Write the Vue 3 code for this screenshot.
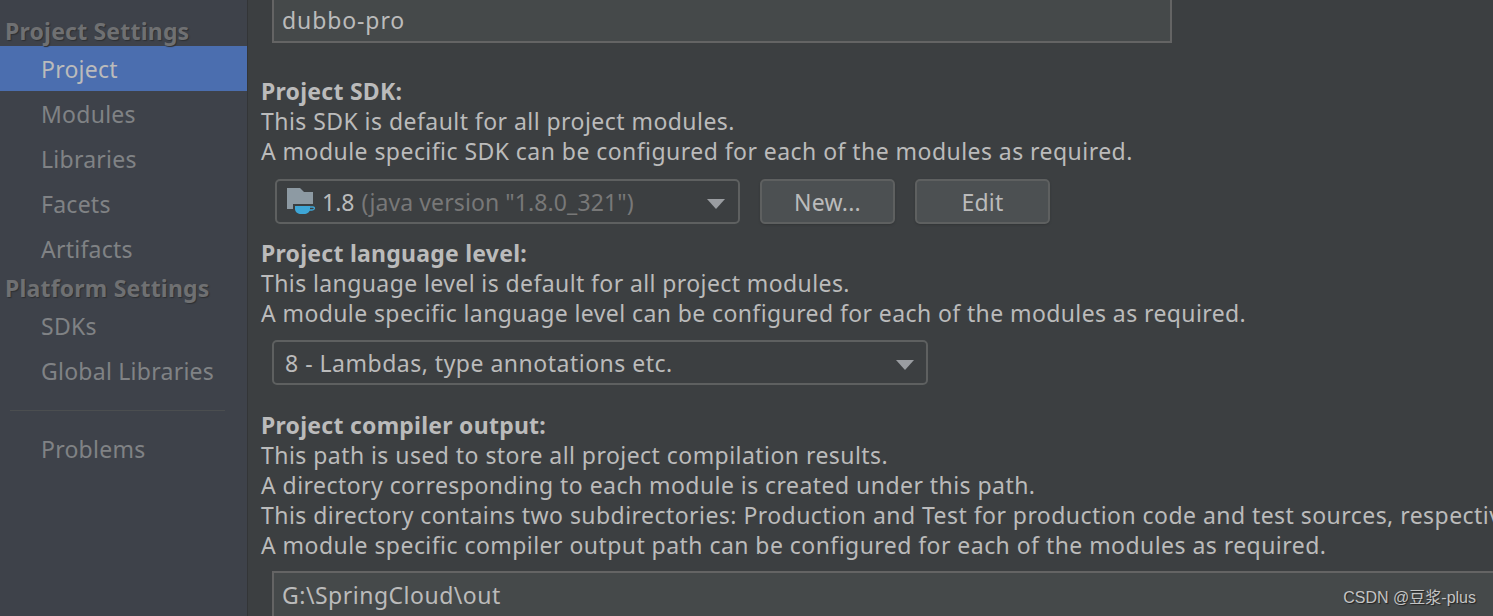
<script setup>
const groups = [
  { title: 'Project Settings', cls: 'h1', items: ['Project', 'Modules', 'Libraries', 'Facets', 'Artifacts'] },
  { title: 'Platform Settings', cls: 'h2', items: ['SDKs', 'Global Libraries'] }
]
const compilerLines = [
  'This path is used to store all project compilation results.',
  'A directory corresponding to each module is created under this path.',
  'This directory contains two subdirectories: Production and Test for production code and test sources, respectively.',
  'A module specific compiler output path can be configured for each of the modules as required.'
]
</script>

<template>
  <div class="window">
    <aside class="sidebar">
      <template v-for="g in groups" :key="g.title">
        <div class="heading" :class="g.cls">{{ g.title }}</div>
        <div v-for="it in g.items" :key="it" class="item" :class="{ selected: it === 'Project' }">{{ it }}</div>
      </template>
      <div class="divider"></div>
      <div class="item">Problems</div>
    </aside>
    <main class="main">
      <div class="field name-field">dubbo-pro</div>

      <section class="block sdk">
        <b>Project SDK:</b>
        <p>This SDK is default for all project modules.</p>
        <p>A module specific SDK can be configured for each of the modules as required.</p>
      </section>
      <div class="sdk-row">
        <div class="combo sdk-combo">
          <svg class="jdk" width="30" height="30" viewBox="0 0 30 30">
            <path d="M0 1h13l4 4h9v17H0z" fill="#8d9aa3" />
            <path d="M6 17h24v13H6z" fill="#3c3f41" />
            <path d="M8 19h15v3c0 3-3 5-6 5h-3c-3 0-6-2-6-5z" fill="#3ea6d6" />
            <path d="M23 20h3c2 0 2 3-1 3h-3" fill="none" stroke="#3ea6d6" stroke-width="1.4" />
          </svg>
          <span class="ver">1.8</span><span class="dim">(java version "1.8.0_321")</span>
          <i class="arrow"></i>
        </div>
        <button class="btn new">New...</button>
        <button class="btn edit">Edit</button>
      </div>

      <section class="block lang">
        <b>Project language level:</b>
        <p>This language level is default for all project modules.</p>
        <p>A module specific language level can be configured for each of the modules as required.</p>
      </section>
      <div class="combo lang-combo">
        <span>8 - Lambdas, type annotations etc.</span>
        <i class="arrow"></i>
      </div>

      <section class="block output">
        <b>Project compiler output:</b>
        <p v-for="l in compilerLines" :key="l">{{ l }}</p>
      </section>
      <div class="field out-field">G:\SpringCloud\out</div>
    </main>
    <div class="mark">CSDN @豆浆-plus</div>
  </div>
</template>

<style>
html, body { margin: 0; background: #3c3f41; }
</style>

<style scoped>
.window {
  position: relative;
  display: flex;
  width: 1493px;
  height: 616px;
  overflow: hidden;
  background: #3c3f41;
  color: #bbbbbb;
  font-family: "Noto Sans", "Open Sans", sans-serif;
  font-size: 23px;
  line-height: 30px;
}
.sidebar {
  flex: 0 0 248px;
  box-sizing: border-box;
  padding-top: 16px;
  background: #3e424a;
  border-right: 1px solid #333537;
}
.heading {
  height: 30px;
  padding-left: 5px;
  color: #6f7072;
  font-weight: 700;
  letter-spacing: 0.2px;
  white-space: nowrap;
  text-shadow: 1px 1px 1px #2e3033;
}
.h2 { margin-top: 2px; }
.item {
  height: 45px;
  line-height: 46px;
  padding-left: 41px;
  color: #808285;
  letter-spacing: 0.25px;
  white-space: nowrap;
}
.selected { background: #4b6eaf; color: #bbbbbb; }
.divider {
  height: 1px;
  margin: 17px 22px 15px 10px;
  background: #4b4e50;
}
.main { flex: 1; min-width: 0; padding-left: 13px; }
.main p { margin: 0; white-space: nowrap; letter-spacing: 0.45px; }
.main b { display: block; font-weight: 700; letter-spacing: 0.25px; }
.main .lang p { letter-spacing: 0.4px; }
.field {
  box-sizing: border-box;
  background: #45494a;
  border: 2px solid #646464;
  padding-left: 8px;
  margin-left: 11px;
  white-space: nowrap;
}
.name-field { width: 900px; height: 44px; margin-top: -1px; border-top: 0; line-height: 42px; letter-spacing: 0.9px; }
.block { margin: 0; }
.sdk { margin-top: 33px; }
.sdk-row { display: flex; margin-top: 13px; margin-left: 14px; gap: 20px; }
.combo {
  position: relative;
  box-sizing: border-box;
  display: flex;
  align-items: center;
  height: 45px;
  border: 2px solid #5e6060;
  border-radius: 5px;
  white-space: nowrap;
}
.sdk-combo { width: 465px; padding-left: 10px; }
.jdk { flex: none; margin-right: 5px; }
.ver { margin-right: 7px; }
.dim { color: #787878; letter-spacing: 0.1px; }
.arrow {
  position: absolute;
  right: 12px;
  top: 18px;
  width: 0;
  height: 0;
  border-left: 9px solid transparent;
  border-right: 9px solid transparent;
  border-top: 10px solid #9a9da1;
}
.sdk-combo .arrow { right: 13px; }
.btn {
  box-sizing: border-box;
  width: 135px;
  height: 45px;
  margin: 0;
  background: #4c5052;
  border: 2px solid #5e6060;
  border-radius: 5px;
  color: #bbbbbb;
  font: inherit;
  letter-spacing: 0.2px;
  box-shadow: 0 1px 2px #333537;
}
.lang { margin-top: 14px; }
.lang-combo { width: 656px; margin-left: 11px; margin-top: 12px; padding-left: 11px; padding-top: 1px; letter-spacing: 0.5px; }
.output { margin-top: 25px; }
.out-field { width: 1300px; height: 60px; margin-top: 11px; border-bottom: 0; line-height: 44px; letter-spacing: 0.5px; }
.mark {
  position: absolute;
  right: 17px;
  bottom: 8px;
  font-family: "Liberation Sans", "Noto Sans CJK SC", sans-serif;
  font-size: 16px;
  line-height: 20px;
  color: #c4c4c4;
  text-shadow: 1px 1px 1px #222;
}
</style>
